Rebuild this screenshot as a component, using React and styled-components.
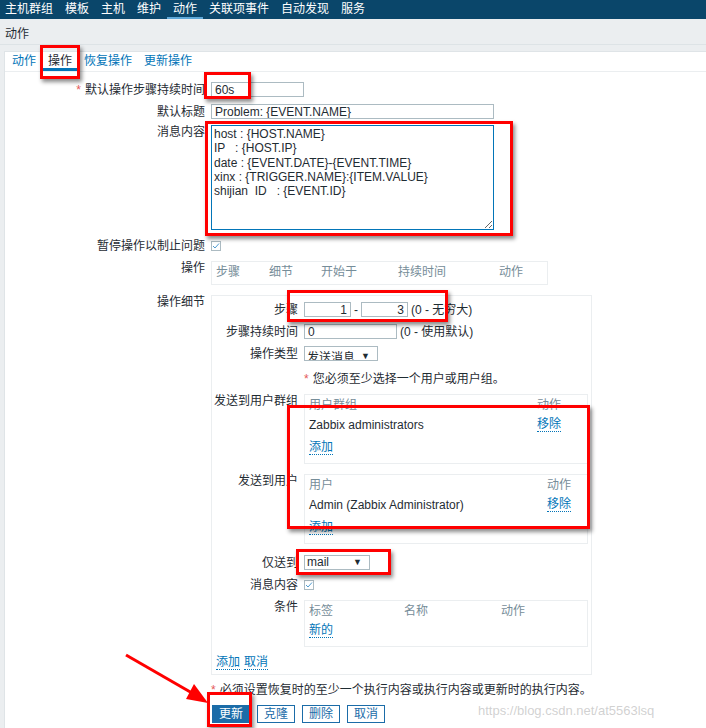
import styled, { createGlobalStyle } from "styled-components";

const GlobalStyle = createGlobalStyle`
  html, body {
    margin: 0;
    padding: 0;
  }
  body {
    font-family: "Liberation Sans", Arial, "Noto Sans CJK SC", sans-serif;
    font-size: 12px;
    color: #1f2c33;
    background: #ebeef0;
  }
`;

const Page = styled.div`
  position: relative;
  width: 706px;
  height: 728px;
  overflow: hidden;
  display: flex;
  flex-direction: column;
  background: #ebeef0;
`;

const TopNav = styled.nav`
  display: flex;
  height: 19px;
  background: #0a466a;
`;

const NavItem = styled.span`
  box-sizing: border-box;
  height: 19px;
  padding: 0 6px;
  line-height: 18px;
  color: #fff;
  white-space: nowrap;
  border-bottom: 2px solid ${({ $active }) => ($active ? "#5ea8d8" : "transparent")};
  &:first-child {
    padding-left: 5px;
  }
`;

const PageHeader = styled.header`
  box-sizing: border-box;
  height: 26px;
  padding: 8px 5px 0;
  border-bottom: 1px solid #dde3e6;
  line-height: 14px;
`;

const Content = styled.main`
  flex: 1;
  margin: 6px 0 0 4px;
  background: #fff;
  border-left: 1px solid #dfe4e7;
  border-top: 1px solid #dfe4e7;
`;

const Tabs = styled.div`
  display: flex;
  height: 19px;
  padding-left: 1px;
  border-bottom: 1px solid #ebeef0;
`;

const Tab = styled.span`
  box-sizing: border-box;
  height: 19px;
  padding: 1px 6px 0;
  line-height: 16px;
  color: ${({ $active }) => ($active ? "#1f2c33" : "#0275b8")};
  border-bottom: 3px solid ${({ $active }) => ($active ? "#0275b8" : "transparent")};
`;

const Form = styled.div`
  padding-top: 10px;
`;

const Row = styled.div`
  display: grid;
  grid-template-columns: 200px 1fr;
  column-gap: 6px;
  align-items: ${({ $top }) => ($top ? "start" : "center")};
  margin-top: ${({ $mt }) => $mt || 0}px;
`;

const PanelRow = styled(Row)`
  grid-template-columns: 86px 1fr;
`;

const Label = styled.label`
  text-align: right;
  line-height: 14px;
  white-space: nowrap;
`;

const Req = styled.span`
  color: #e45959;
  margin-right: 4px;
`;

const Field = styled.div`
  display: flex;
  align-items: center;
  gap: 3px;
  line-height: 14px;
  white-space: nowrap;
`;

const TextInput = styled.input`
  box-sizing: border-box;
  width: ${({ $w }) => $w}px;
  height: 15px;
  padding: 0 3px;
  border: 1px solid #acbbc2;
  font: 12px "Liberation Sans", Arial, sans-serif;
  color: #1f2c33;
  text-align: ${({ $right }) => ($right ? "right" : "left")};
  outline: none;
`;

const TextArea = styled.textarea`
  box-sizing: border-box;
  display: block;
  width: 283px;
  height: 105px;
  padding: 1px 2px;
  border: 1px solid #0275b8;
  font: 12px "Liberation Sans", Arial, sans-serif;
  line-height: 14.3px;
  color: #1f2c33;
  outline: none;
  resize: both;
`;

const Box = styled.span`
  box-sizing: border-box;
  display: inline-flex;
  align-items: center;
  justify-content: center;
  width: 10px;
  height: 10px;
  border: 1px solid #acbbc2;
  background: #fff;
`;

const Select = styled.div`
  box-sizing: border-box;
  display: flex;
  justify-content: space-between;
  align-items: ${({ $clip }) => ($clip ? "flex-start" : "center")};
  width: ${({ $w }) => $w}px;
  height: 15px;
  padding: ${({ $clip }) => ($clip ? "5px 7px 0 2px" : "0 7px 0 2px")};
  border: 1px solid #acbbc2;
  overflow: hidden;
  line-height: 13px;
`;

const Arrow = styled.span`
  font-size: 9px;
  line-height: 13px;
  align-self: center;
`;

const Hint = styled.span`
  color: #1f2c33;
`;

const OpsTable = styled.div`
  box-sizing: border-box;
  width: 337px;
  height: 24px;
  padding: 3px 4px;
  border: 1px solid #ebeef0;
  display: grid;
  grid-template-columns: 53px 52px 77px 101px 1fr;
  line-height: 14px;
  color: #768d99;
`;

const Panel = styled.div`
  box-sizing: border-box;
  width: 381px;
  height: 380px;
  padding: 6px 4px 0 0;
  border: 1px solid #ebeef0;
`;

const SubTable = styled.div`
  box-sizing: border-box;
  width: 284px;
  height: ${({ $h }) => $h}px;
  padding: 3px 4px 0;
  border: 1px solid #ebeef0;
`;

const TRow = styled.div`
  display: grid;
  grid-template-columns: ${({ $cols }) => $cols};
  align-items: start;
  height: ${({ $h }) => $h}px;
  line-height: 14px;
  color: ${({ $head }) => ($head ? "#768d99" : "#1f2c33")};
`;

const Link = styled.a`
  display: inline-block;
  color: #0275b8;
  line-height: 13px;
  text-decoration: none;
  border-bottom: 1px dotted #0275b8;
  justify-self: start;
  align-self: start;
`;

const PanelLinks = styled.div`
  display: flex;
  gap: 4px;
  margin-top: 9px;
  padding-left: 4px;
`;

const Note = styled.div`
  margin-top: ${({ $mt }) => $mt || 0}px;
  line-height: 14px;
  white-space: nowrap;
`;

const ButtonBar = styled.div`
  display: flex;
  gap: 7px;
  margin-top: 8px;
  padding-left: 1px;
`;

const Button = styled.button`
  box-sizing: border-box;
  height: 18px;
  padding: 0 6px;
  font: 12px "Liberation Sans", Arial, "Noto Sans CJK SC", sans-serif;
  line-height: 16px;
  border: 1px solid #1b6ca8;
  background: ${({ $primary }) => ($primary ? "#1b6ca8" : "#fff")};
  color: ${({ $primary }) => ($primary ? "#fff" : "#1b6ca8")};
  cursor: pointer;
`;

const RedBox = styled.div`
  position: absolute;
  box-sizing: border-box;
  left: ${({ $x }) => $x}px;
  top: ${({ $y }) => $y}px;
  width: ${({ $w }) => $w}px;
  height: ${({ $h }) => $h}px;
  border: 3px solid #f00;
  box-shadow: 2px 3px 4px rgba(0, 0, 0, 0.45);
  pointer-events: none;
`;

const Overlay = styled.svg`
  position: absolute;
  left: 0;
  top: 0;
  pointer-events: none;
`;

const Watermark = styled.span`
  position: absolute;
  left: 478px;
  top: 703px;
  font-size: 13px;
  color: rgba(170, 170, 170, 0.55);
  white-space: nowrap;
  pointer-events: none;
`;

function Check() {
  return (
    <Box>
      <svg width="8" height="8" viewBox="0 0 8 8">
        <path d="M1 4 L3 6 L7 1.5" fill="none" stroke="#4f9bd0" strokeWidth="1" />
      </svg>
    </Box>
  );
}

const navItems = ["主机群组", "模板", "主机", "维护", "动作", "关联项事件", "自动发现", "服务"];
const tabs = ["动作", "操作", "恢复操作", "更新操作"];

const message = `host : {HOST.NAME}
IP   : {HOST.IP}
date : {EVENT.DATE}-{EVENT.TIME}
xinx : {TRIGGER.NAME}:{ITEM.VALUE}
shijian  ID   : {EVENT.ID}`;

const redBoxes = [
  { x: 40, y: 45, w: 40, h: 34 },
  { x: 204, y: 72, w: 47, h: 27 },
  { x: 205, y: 121, w: 308, h: 115 },
  { x: 287, y: 290, w: 161, h: 32 },
  { x: 287, y: 405, w: 303, h: 124 },
  { x: 296, y: 549, w: 95, h: 26 },
  { x: 207, y: 692, w: 45, h: 35 },
];

function UserTable({ head, name, actionW }) {
  const cols = `1fr ${actionW}px`;
  return (
    <SubTable $h={70}>
      <TRow $head $h={20} $cols={cols}>
        <span>{head}</span>
        <span>动作</span>
      </TRow>
      <TRow $h={23} $cols={cols}>
        <span>{name}</span>
        <Link>移除</Link>
      </TRow>
      <TRow $h={14} $cols="1fr">
        <Link>添加</Link>
      </TRow>
    </SubTable>
  );
}

export default function App() {
  return (
    <Page>
      <GlobalStyle />
      <TopNav>
        {navItems.map((item, i) => (
          <NavItem key={item} $active={i === 4}>
            {item}
          </NavItem>
        ))}
      </TopNav>
      <PageHeader>动作</PageHeader>

      <Content>
        <Tabs>
          {tabs.map((t, i) => (
            <Tab key={t} $active={i === 1}>
              {t}
            </Tab>
          ))}
        </Tabs>

        <Form>
          <Row>
            <Label>
              <Req>*</Req>默认操作步骤持续时间
            </Label>
            <Field>
              <TextInput $w={93} defaultValue="60s" readOnly />
            </Field>
          </Row>
          <Row $mt={7}>
            <Label>默认标题</Label>
            <Field>
              <TextInput $w={283} defaultValue="Problem: {EVENT.NAME}" readOnly />
            </Field>
          </Row>
          <Row $mt={6} $top>
            <Label>消息内容</Label>
            <TextArea defaultValue={message} readOnly />
          </Row>
          <Row $mt={9}>
            <Label>暂停操作以制止问题</Label>
            <Field>
              <Check />
            </Field>
          </Row>
          <Row $mt={8} $top>
            <Label>操作</Label>
            <OpsTable>
              <span>步骤</span>
              <span>细节</span>
              <span>开始于</span>
              <span>持续时间</span>
              <span>动作</span>
            </OpsTable>
          </Row>
          <Row $mt={10} $top>
            <Label>操作细节</Label>
            <Panel>
              <PanelRow>
                <Label>步骤</Label>
                <Field>
                  <TextInput $w={47} $right defaultValue="1" readOnly />
                  <span>-</span>
                  <TextInput $w={47} $right defaultValue="3" readOnly />
                  <Hint>(0 - 无穷大)</Hint>
                </Field>
              </PanelRow>
              <PanelRow $mt={7}>
                <Label>步骤持续时间</Label>
                <Field>
                  <TextInput $w={93} defaultValue="0" readOnly />
                  <Hint>(0 - 使用默认)</Hint>
                </Field>
              </PanelRow>
              <PanelRow $mt={7}>
                <Label>操作类型</Label>
                <Field>
                  <Select $w={74} $clip>
                    <span>发送消息</span>
                    <Arrow>▼</Arrow>
                  </Select>
                </Field>
              </PanelRow>
              <PanelRow $mt={11}>
                <span />
                <Note>
                  <Req>*</Req>您必须至少选择一个用户或用户组。
                </Note>
              </PanelRow>
              <PanelRow $mt={8} $top>
                <Label>发送到用户群组</Label>
                <UserTable head="用户群组" name="Zabbix administrators" actionW={46} />
              </PanelRow>
              <PanelRow $mt={10} $top>
                <Label>发送到用户</Label>
                <UserTable head="用户" name="Admin (Zabbix Administrator)" actionW={36} />
              </PanelRow>
              <PanelRow $mt={11}>
                <Label>仅送到</Label>
                <Field>
                  <Select $w={66}>
                    <span>mail</span>
                    <Arrow>▼</Arrow>
                  </Select>
                </Field>
              </PanelRow>
              <PanelRow $mt={8}>
                <Label>消息内容</Label>
                <Field>
                  <Check />
                </Field>
              </PanelRow>
              <PanelRow $mt={8} $top>
                <Label>条件</Label>
                <SubTable $h={47}>
                  <TRow $head $h={20} $cols="95px 97px 1fr">
                    <span>标签</span>
                    <span>名称</span>
                    <span>动作</span>
                  </TRow>
                  <TRow $h={14} $cols="1fr">
                    <Link>新的</Link>
                  </TRow>
                </SubTable>
              </PanelRow>
              <PanelLinks>
                <Link>添加</Link>
                <Link>取消</Link>
              </PanelLinks>
            </Panel>
          </Row>
          <Row $mt={8}>
            <span />
            <Note>
              <Req>*</Req>必须设置恢复时的至少一个执行内容或执行内容或更新时的执行内容。
            </Note>
          </Row>
          <Row>
            <span />
            <ButtonBar>
              <Button $primary>更新</Button>
              <Button>克隆</Button>
              <Button>删除</Button>
              <Button>取消</Button>
            </ButtonBar>
          </Row>
        </Form>
      </Content>

      {redBoxes.map((b, i) => (
        <RedBox key={i} $x={b.x} $y={b.y} $w={b.w} $h={b.h} />
      ))}
      <Overlay width="706" height="728" viewBox="0 0 706 728">
        <line x1="126" y1="655" x2="192" y2="693" stroke="#f00" strokeWidth="3" />
        <polygon points="208,703 186,699 194,684" fill="#f00" />
      </Overlay>
      <Watermark>https://blog.csdn.net/at5563lsq</Watermark>
    </Page>
  );
}
